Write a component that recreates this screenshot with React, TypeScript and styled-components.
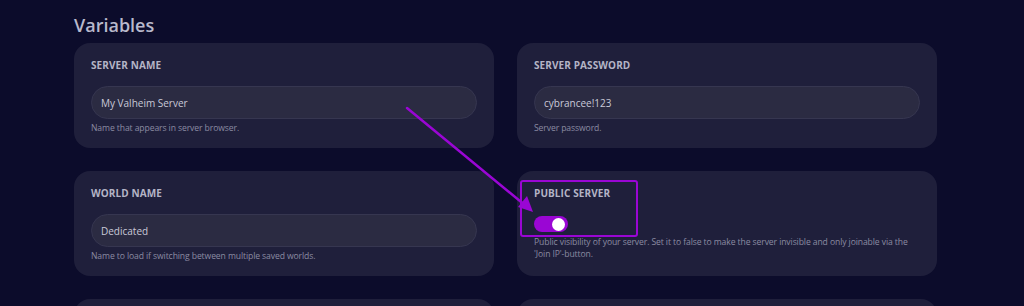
import styled, { createGlobalStyle } from "styled-components";

const GlobalStyle = createGlobalStyle`
  html, body {
    margin: 0;
    padding: 0;
    background: #0c0c2b;
    overflow: hidden;
  }
  body {
    font-family: "Open Sans", "Noto Sans", sans-serif;
  }
`;

const Page = styled.div`
  position: relative;
  padding: 15px 0 0 74px;
  width: 863px;
`;

const Heading = styled.h2`
  margin: 0 0 7px;
  font-size: 18px;
  line-height: 21px;
  font-weight: 600;
  color: #b9b9cc;
`;

const Grid = styled.div`
  display: grid;
  grid-template-columns: repeat(2, 420px);
  column-gap: 23px;
  row-gap: 23px;
`;

const Card = styled.div`
  position: relative;
  box-sizing: border-box;
  height: 105px;
  padding: 15px 17px 0;
  border-radius: 16px;
  background: #1f1f3b;
`;

const Label = styled.div`
  font-size: 10px;
  line-height: 14px;
  font-weight: 700;
  text-transform: uppercase;
  color: #b4b4c6;
  letter-spacing: 0.1px;
`;

const Input = styled.input`
  display: block;
  box-sizing: border-box;
  width: 100%;
  height: 33px;
  margin-top: 14px;
  padding: 0 9px;
  border-radius: 17px;
  border: 1px solid #363650;
  background: #2b2b42;
  color: #c9c9d8;
  font-family: inherit;
  font-size: 10px;
  outline: none;
`;

const Help = styled.div<{ $gap?: number }>`
  margin-top: ${(p) => p.$gap ?? 3}px;
  font-size: 8.6px;
  line-height: 12px;
  letter-spacing: -0.1px;
  color: #8b8ba2;
`;

const Toggle = styled.div<{ $on: boolean }>`
  position: relative;
  width: 34px;
  height: 16px;
  margin-top: 16px;
  border-radius: 8px;
  background: ${(p) => (p.$on ? "#9a06d4" : "#3a3a52")};
  &::after {
    content: "";
    position: absolute;
    top: 1.5px;
    left: ${(p) => (p.$on ? "18px" : "2px")};
    width: 13px;
    height: 13px;
    border-radius: 50%;
    background: #ffffff;
  }
`;

const Highlight = styled.div`
  position: absolute;
  left: 3px;
  top: 9px;
  width: 118px;
  height: 57px;
  box-sizing: border-box;
  border: 2px solid #9a06d4;
  border-radius: 3px;
  pointer-events: none;
`;

const Annotation = styled.svg`
  position: absolute;
  left: 0;
  top: 0;
  pointer-events: none;
`;

interface TextVar {
  label: string;
  value: string;
  help: string;
}

function TextCard({ label, value, help }: TextVar) {
  return (
    <Card>
      <Label>{label}</Label>
      <Input defaultValue={value} />
      <Help>{help}</Help>
    </Card>
  );
}

export default function App() {
  return (
    <>
      <GlobalStyle />
      <Page>
        <Heading>Variables</Heading>
        <Grid>
          <TextCard
            label="Server Name"
            value="My Valheim Server"
            help="Name that appears in server browser."
          />
          <TextCard label="Server Password" value="cybrancee!123" help="Server password." />
          <TextCard
            label="World Name"
            value="Dedicated"
            help="Name to load if switching between multiple saved worlds."
          />
          <Card>
            <Label>Public Server</Label>
            <Toggle $on />
            <Help $gap={4}>
              Public visibility of your server. Set it to false to make the server invisible and
              only joinable via the 'Join IP'-button.
            </Help>
            <Highlight />
          </Card>
          <Card />
          <Card />
        </Grid>
        <Annotation width="1024" height="306" viewBox="0 0 1024 306">
          <line x1="407" y1="108" x2="526" y2="206" stroke="#9a06d4" strokeWidth="2.5" strokeLinecap="round" />
          <polygon points="533,212 518,207 527,196" fill="#9a06d4" />
        </Annotation>
      </Page>
    </>
  );
}
